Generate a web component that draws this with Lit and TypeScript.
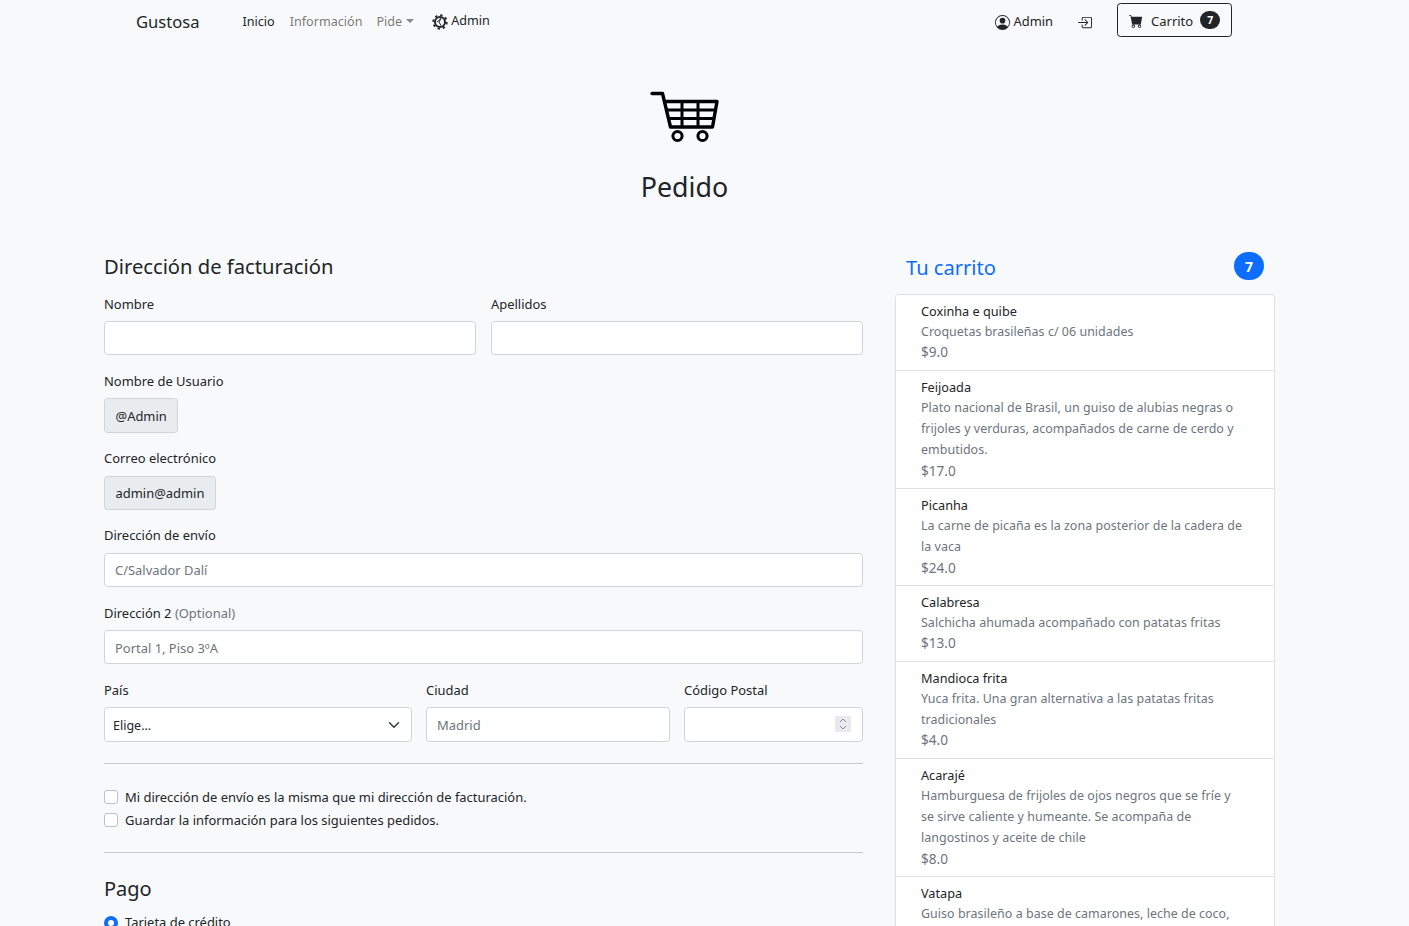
import { LitElement, html, css } from "lit";
import { customElement } from "lit/decorators.js";

const items = [
  ["Coxinha e quibe", "Croquetas brasileñas c/ 06 unidades", "$9.0"],
  ["Feijoada", "Plato nacional de Brasil, un guiso de alubias negras o frijoles y verduras, acompañados de carne de cerdo y embutidos.", "$17.0"],
  ["Picanha", "La carne de picaña es la zona posterior de la cadera de la vaca", "$24.0"],
  ["Calabresa", "Salchicha ahumada acompañado con patatas fritas", "$13.0"],
  ["Mandioca frita", "Yuca frita. Una gran alternativa a las patatas fritas tradicionales", "$4.0"],
  ["Acarajé", "Hamburguesa de frijoles de ojos negros que se fríe y se sirve caliente y humeante. Se acompaña de langostinos y aceite de chile", "$8.0"],
  ["Vatapa", "Guiso brasileño a base de camarones, leche de coco, pan y maní", "$15.0"],
];

@customElement("app-root")
export class AppRoot extends LitElement {
  static styles = css`
    :host {
      display: block;
      height: 926px;
      overflow: hidden;
      background: #f8f9fa;
      color: #212529;
      font-family: "Noto Sans", "Open Sans", sans-serif;
      font-size: 12.95px;
      line-height: 21px;
    }
    * { box-sizing: border-box; }
    nav { display: flex; align-items: center; height: 41px; padding: 1px 177px 0 136px; }
    .brand { font-size: 16.6px; width: 106.5px; color: #212529; }
    .link { color: #212529; white-space: nowrap; font-size: 12.6px; }
    .muted { color: rgba(0,0,0,.55); }
    .info { margin-left: 15px; }
    .pide { margin-left: 14px; display: flex; align-items: center; }
    .caret { width: 0; height: 0; margin-left: 4px; border-top: 4px solid #888; border-left: 4px solid transparent; border-right: 4px solid transparent; }
    .adm { margin-left: 18px; display: flex; align-items: center; gap: 3px; position: relative; top: -1px; }
    .adm svg { position: relative; top: 2px; }
    .spacer { flex: 1; }
    .user { display: flex; align-items: center; gap: 3px; font-size: 12.9px; }
    .user svg, .login svg { margin-top: 2px; display: block; }
    .login { margin-left: 24px; display: flex; }
    .cartbtn { margin-left: 25px; width: 115px; height: 34px; border: 1px solid #212529; border-radius: 3.5px; display: flex; align-items: center; padding: 2px 0 0 11px; position: relative; top: -1px; font-size: 13px; }
    .cartbtn svg { margin-right: 8px; }
    .pill { background: #212529; color: #fff; font-size: 10.5px; font-weight: 700; width: 20px; height: 18px; border-radius: 9px; margin: -2px 0 0 7px; display: flex; align-items: center; justify-content: center; }
    .hero { width: 1161px; margin-left: 104px; display: flex; flex-direction: column; align-items: center; padding-top: 49px; height: 212px; }
    .hero svg { display: block; margin-right: 2px; }
    h1 { font-weight: 400; font-size: 26.8px; line-height: 36px; margin: 23px 0 0; color: #212529; }
    .main { display: flex; align-items: flex-start; padding-left: 104px; gap: 32px; }
    .left { width: 759px; flex: none; }
    .right { width: 380px; flex: none; }
    h4 { font-weight: 400; font-size: 20.2px; line-height: 26px; margin: 0; }
    .h4bill { height: 41px; }
    .row { display: flex; gap: 15px; }
    .group { display: flex; flex-direction: column; align-items: flex-start; height: 77.2px; min-width: 0; }
    .grow { flex: 1; }
    .group label { height: 21px; margin-bottom: 6px; white-space: nowrap; }
    .group label.up { margin: -1px 0 7px; }
    .opt { color: #6c757d; }
    .in { width: 100%; height: 34px; border: 1px solid #ced4da; border-radius: 3.5px; background: #fff; padding: 2.5px 10px 0; display: flex; align-items: center; color: #6c757d; }
    .ro { width: auto; background: #e9ecef; color: #212529; height: 35px; padding: 1px 10.5px 0; }
    .ro.b { height: 34px; margin-top: 1px; }
    .sel { color: #212529; padding: 2px 8px 0; justify-content: space-between; height: 35px; font-size: 12.5px; }
    .tall { height: 35px; }
    .num { justify-content: flex-end; height: 35px; padding: 0 11px 0 0; }
    .spin { width: 16px; height: 16px; background: #eaeaee; display: flex; align-items: center; justify-content: center; }
    .c1 { width: 308px; flex: none; }
    .c2 { width: 244px; flex: none; margin-left: -1px; }
    .c3 { width: 179px; flex: none; margin-left: -1px; }
    hr { border: none; border-top: 1px solid #c6c7c8; margin: 0; height: 1px; }
    .sep { margin-top: 6px; }
    .checks { padding: 23px 0 21px; display: flex; flex-direction: column; gap: 2px; }
    .check { display: flex; align-items: center; gap: 7px; height: 21px; }
    .box { width: 14px; height: 14px; margin-top: -2px; border: 1px solid #bcc1c6; border-radius: 3px; background: #fff; flex: none; }
    .pago { margin-top: 23px; height: 36px; font-size: 20px; line-height: 26px; }
    .radio { width: 14px; height: 14px; border-radius: 50%; border: 4px solid #0d6efd; background: #fff; flex: none; }
    .carthead { display: flex; justify-content: space-between; align-items: center; height: 28px; padding: 0 11px; margin: -1px 0 14px; }
    .carthead span.t { color: #0d6efd; font-size: 20.1px; position: relative; top: 1px; }
    .count { background: #0d6efd; color: #fff; font-weight: 700; font-size: 14px; width: 30px; height: 28px; border-radius: 14px; display: flex; align-items: center; justify-content: center; }
    ul { list-style: none; margin: 0; padding: 0; background: #fff; border: 1px solid #dfdfdf; border-radius: 3.5px; }
    li { padding: 6px 30px 5.8px 25px; border-top: 1px solid #dfdfdf; }
    li:first-child { border-top: none; }
    .title { color: #212529; line-height: 20px; font-size: 12.7px; }
    .desc { color: #6c757d; line-height: 21.4px; font-size: 12.45px; letter-spacing: .04px; }
    .price { color: #6c757d; line-height: 21.4px; font-size: 13.6px; margin: -1px 0 1px; }
  `;

  render() {
    return html`
      <nav>
        <span class="brand">Gustosa</span>
        <span class="link">Inicio</span>
        <span class="link muted info">Información</span>
        <span class="link muted pide">Pide<span class="caret"></span></span>
        <span class="link adm">
          <svg width="16" height="16" viewBox="0 0 16 16"><circle cx="8" cy="8" r="5" fill="none" stroke="#212529" stroke-width="2"/><circle cx="8" cy="8" r="6.8" fill="none" stroke="#212529" stroke-width="1.8" stroke-dasharray="2.4 2.94"/><path d="M5 8 L9 4.5 M9 11.5 L7 8 L9 4.5" fill="none" stroke="#212529" stroke-width="1"/></svg>
          Admin
        </span>
        <span class="spacer"></span>
        <span class="link user">
          <svg width="15" height="15" viewBox="0 0 16 16" fill="#212529"><path d="M11 6a3 3 0 1 1-6 0 3 3 0 0 1 6 0z"/><path fill-rule="evenodd" d="M0 8a8 8 0 1 1 16 0A8 8 0 0 1 0 8zm8-7a7 7 0 0 0-5.468 11.37C3.242 11.226 4.805 10 8 10s4.757 1.225 5.468 2.37A7 7 0 0 0 8 1z"/></svg>
          Admin
        </span>
        <span class="login">
          <svg width="15" height="15" viewBox="0 0 16 16" fill="#212529"><path fill-rule="evenodd" d="M6 3.5a.5.5 0 0 1 .5-.5h8a.5.5 0 0 1 .5.5v9a.5.5 0 0 1-.5.5h-8a.5.5 0 0 1-.5-.5v-2a.5.5 0 0 0-1 0v2A1.5 1.5 0 0 0 6.5 14h8a1.5 1.5 0 0 0 1.5-1.5v-9A1.5 1.5 0 0 0 14.5 2h-8A1.5 1.5 0 0 0 5 3.5v2a.5.5 0 0 0 1 0v-2z"/><path fill-rule="evenodd" d="M11.854 8.354a.5.5 0 0 0 0-.708l-3-3a.5.5 0 1 0-.708.708L10.293 7.5H1.5a.5.5 0 0 0 0 1h8.793l-2.147 2.146a.5.5 0 0 0 .708.708l3-3z"/></svg>
        </span>
        <span class="cartbtn">
          <svg width="14" height="14" viewBox="0 0 16 16" fill="#212529"><path d="M0 1.5A.5.5 0 0 1 .5 1H2a.5.5 0 0 1 .485.379L2.89 3H14.5a.5.5 0 0 1 .491.592l-1.5 8A.5.5 0 0 1 13 12H4a.5.5 0 0 1-.491-.408L2.01 3.607 1.61 2H.5a.5.5 0 0 1-.5-.5zM5 12a2 2 0 1 0 0 4 2 2 0 0 0 0-4zm7 0a2 2 0 1 0 0 4 2 2 0 0 0 0-4zm-7 1a1 1 0 1 1 0 2 1 1 0 0 1 0-2zm7 0a1 1 0 1 1 0 2 1 1 0 0 1 0-2z"/></svg>
          Carrito<span class="pill">7</span>
        </span>
      </nav>
      <div class="hero">
        <svg width="72" height="56" viewBox="648 90 72 56" fill="none" stroke="#000" stroke-width="3.4">
          <path d="M652 93.5H662.5L670.5 127H712.5L717 101.5H664.5" stroke-linejoin="round" stroke-linecap="round"/>
          <path d="M666.5 110H715.5M668.5 118.5H714M682 101.5V127M698 101.5V127" stroke-width="3"/>
          <circle cx="677.5" cy="136" r="4.6" stroke-width="3"/>
          <circle cx="702.5" cy="136" r="4.6" stroke-width="3"/>
        </svg>
        <h1>Pedido</h1>
      </div>
      <div class="main">
        <div class="left">
          <h4 class="h4bill">Dirección de facturación</h4>
          <div class="row">
            <div class="group grow"><label>Nombre</label><div class="in"></div></div>
            <div class="group grow"><label>Apellidos</label><div class="in"></div></div>
          </div>
          <div class="group"><label>Nombre de Usuario</label><div class="in ro">@Admin</div></div>
          <div class="group"><label>Correo electrónico</label><div class="in ro b">admin@admin</div></div>
          <div class="group"><label class="up">Dirección de envío</label><div class="in">C/Salvador Dalí</div></div>
          <div class="group"><label>Dirección 2 <span class="opt">(Optional)</span></label><div class="in">Portal 1, Piso 3ºA</div></div>
          <div class="row">
            <div class="group c1"><label>País</label><div class="in sel">Elige...
              <svg width="12" height="12" viewBox="0 0 16 16" fill="none" stroke="#343a40" stroke-width="2" stroke-linecap="round" stroke-linejoin="round" style="margin-right:3px"><path d="M2 5l6 6 6-6"/></svg>
            </div></div>
            <div class="group c2"><label>Ciudad</label><div class="in tall">Madrid</div></div>
            <div class="group c3"><label>Código Postal</label><div class="in num"><span class="spin">
              <svg width="8" height="14" viewBox="0 0 8 14" fill="none" stroke="#8a8a90" stroke-width="1"><path d="M1 5l3-3 3 3M1 9l3 3 3-3"/></svg>
            </span></div></div>
          </div>
          <hr class="sep" />
          <div class="checks">
            <div class="check"><span class="box"></span>Mi dirección de envío es la misma que mi dirección de facturación.</div>
            <div class="check"><span class="box"></span>Guardar la información para los siguientes pedidos.</div>
          </div>
          <hr />
          <div class="pago">Pago</div>
          <div class="check"><span class="radio"></span>Tarjeta de crédito</div>
        </div>
        <div class="right">
          <div class="carthead"><span class="t">Tu carrito</span><span class="count">7</span></div>
          <ul>
            ${items.map(([t, d, p]) => html`<li><div class="title">${t}</div><div class="desc">${d}</div><div class="price">${p}</div></li>`)}
          </ul>
        </div>
      </div>
    `;
  }
}
